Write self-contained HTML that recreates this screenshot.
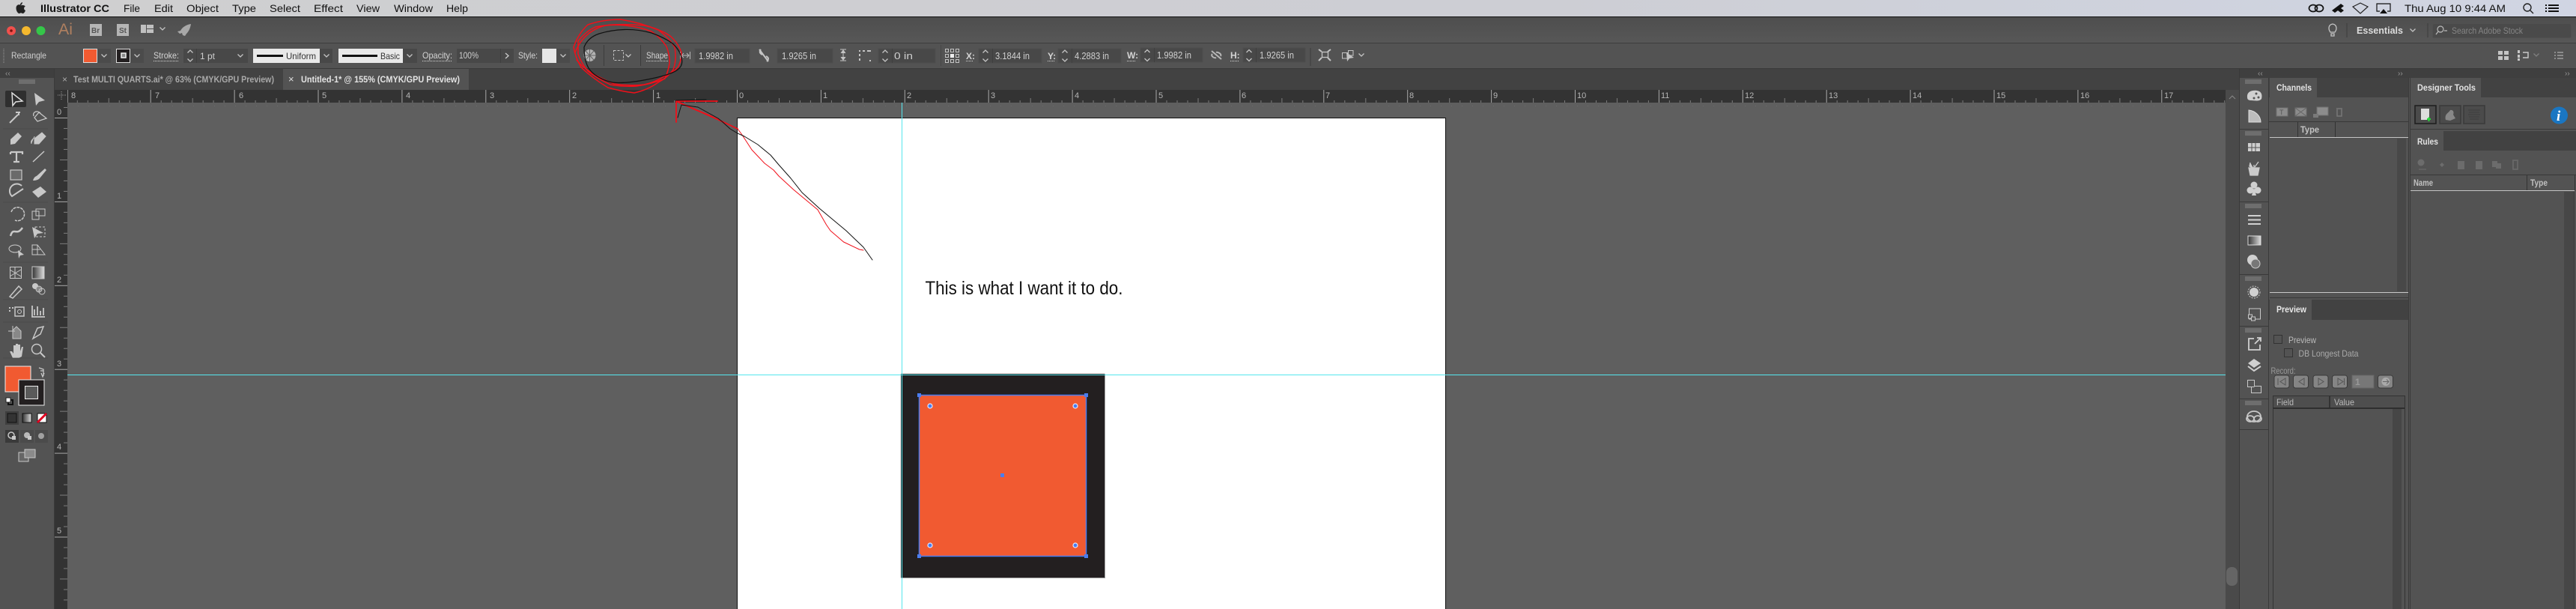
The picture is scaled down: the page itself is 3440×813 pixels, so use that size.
<!DOCTYPE html>
<html><head><meta charset="utf-8"><title>Illustrator CC</title>
<style>
html,body{margin:0;padding:0;background:#5f5f5f;width:3440px;height:813px;overflow:hidden}
svg{display:block}
text{font-family:"Liberation Sans",sans-serif;fill:#cfcfcf;font-size:12px}
.m{fill:#111;font-size:14px}
.b{font-weight:bold}
.l{fill:#d4d4d4;font-size:12px}
.r{fill:#b5b5b5;font-size:11px}
.i{fill:#c8c8c8}
.s{fill:none;stroke:#c8c8c8;stroke-width:1.5}
.f{fill:#484848;stroke:#4e4e4e}
.sep{stroke:#3c3c3c;stroke-width:1}
.u{stroke:#d4d4d4;stroke-width:1;stroke-dasharray:1 1;fill:none}
</style></head><body>
<svg width="3440" height="813" viewBox="0 0 3440 813" xmlns="http://www.w3.org/2000/svg">
<defs>
<linearGradient id="mb" x1="0" x2="1" y1="0" y2="0"><stop offset="0" stop-color="#cfcfd0"/><stop offset=".6" stop-color="#cdced4"/><stop offset="1" stop-color="#d0d5e3"/></linearGradient>
<linearGradient id="tb" x1="0" x2="0" y1="0" y2="1"><stop offset="0" stop-color="#4e4e4e"/><stop offset="1" stop-color="#575757"/></linearGradient>
<linearGradient id="gr" x1="0" x2="1" y1="0" y2="0"><stop offset="0" stop-color="#333"/><stop offset="1" stop-color="#ddd"/></linearGradient>
<pattern id="rt" patternUnits="userSpaceOnUse" x="984" y="120" width="111.9" height="17">
<path d="M.5 0V17" stroke="#a8a8a8" fill="none"/>
<path d="M14.5 14V17M28.5 14V17M42.5 14V17M56.5 11V17M70.5 14V17M84.4 14V17M98.4 14V17" stroke="#7d7d7d" fill="none"/>
</pattern>
<pattern id="rl" patternUnits="userSpaceOnUse" x="73" y="157" width="17" height="111.9">
<path d="M0 .5H17" stroke="#a8a8a8" fill="none"/>
<path d="M12 14.5H17M12 28.5H17M12 42.5H17M7 56.5H17M12 70.5H17M12 84.4H17M12 98.4H17" stroke="#7d7d7d" fill="none"/>
</pattern>
<g id="ch"><path d="M-3.5 -1.5L0 2L3.5 -1.5" fill="none" stroke="#c4c4c4" stroke-width="1.3"/></g>
<g id="sp"><path d="M-3.5 -4L0 -7.5L3.5 -4M-3.5 4L0 7.5L3.5 4" fill="none" stroke="#c4c4c4" stroke-width="1.3"/></g>
<g id="grip"><path d="M-10 -3V3M-8 -3V3M-6 -3V3M-4 -3V3M-2 -3V3M0 -3V3M2 -3V3M4 -3V3M6 -3V3M8 -3V3M10 -3V3" stroke="#8a8a8a" stroke-width="1"/></g>
<g id="nb"><rect width="20" height="17" rx="3" fill="#858585" stroke="#3a3a3a"/></g>
</defs>

<!-- base -->
<rect width="3440" height="813" fill="#5f5f5f"/>

<!-- menu bar -->
<rect width="3440" height="22" fill="url(#mb)"/>
<rect y="22" width="3440" height="1" fill="#111"/>
<path d="M27.5 7.5C29 6 30 4.5 30 3C28.500 3.300 27 4.500 27 6.500C25 5.600 21.500 6.500 21.500 11C21.500 14.500 24 18 25.500 18C26.500 18 27 17.300 28 17.300C29 17.300 29.500 18 30.500 18C32 18 33.500 15.500 34 14C31.500 13 31.500 9.500 33.800 8.500C32.500 6.800 29.500 6.500 27.500 7.500Z" fill="#222"/>
<text class="m b" x="54" y="16" textLength="92" lengthAdjust="spacingAndGlyphs">Illustrator CC</text>
<text class="m" x="165" y="16" textLength="22" lengthAdjust="spacingAndGlyphs">File</text>
<text class="m" x="206" y="16" textLength="25" lengthAdjust="spacingAndGlyphs">Edit</text>
<text class="m" x="249" y="16" textLength="43" lengthAdjust="spacingAndGlyphs">Object</text>
<text class="m" x="310" y="16" textLength="32" lengthAdjust="spacingAndGlyphs">Type</text>
<text class="m" x="360" y="16" textLength="41" lengthAdjust="spacingAndGlyphs">Select</text>
<text class="m" x="419" y="16" textLength="39" lengthAdjust="spacingAndGlyphs">Effect</text>
<text class="m" x="476" y="16" textLength="31" lengthAdjust="spacingAndGlyphs">View</text>
<text class="m" x="526" y="16" textLength="52" lengthAdjust="spacingAndGlyphs">Window</text>
<text class="m" x="596" y="16" textLength="29" lengthAdjust="spacingAndGlyphs">Help</text>
<g fill="none" stroke="#111" stroke-width="1.700">
<ellipse cx="3089" cy="11" rx="5.500" ry="4.500"/><ellipse cx="3097" cy="11" rx="5.500" ry="4.500"/>
</g>
<path d="M3118 5l4 3-4 3 4 3 -4-3 0 0-4 3 4 3 4-3 4 3 4-3-4-3 4-3-4-3-4 3z" fill="#111"/>
<path d="M3142 9L3152 4L3162 9L3152 18Z" fill="none" stroke="#222" stroke-width="1.200"/>
<path d="M3178 15H3174V5H3192V15H3188" fill="none" stroke="#111" stroke-width="1.200"/>
<path d="M3178 18H3188L3183 12Z" fill="#111"/>
<text class="m" x="3211" y="16" textLength="135" lengthAdjust="spacingAndGlyphs">Thu Aug 10  9:44 AM</text>
<circle cx="3375" cy="10" r="5" fill="none" stroke="#222" stroke-width="1.400"/><path d="M3379 14L3383 18" stroke="#222" stroke-width="1.400"/>
<path d="M3399 7h2M3399 11h2M3399 15h2M3403 7h14M3403 11h14M3403 15h14" stroke="#111" stroke-width="2"/>

<!-- app title bar -->
<rect y="23" width="3440" height="34" fill="url(#tb)"/>
<rect y="57" width="3440" height="1" fill="#3c3c3c"/>
<circle cx="15" cy="41" r="6" fill="#f0504c"/><circle cx="15" cy="41" r="1.800" fill="#7a1410"/>
<circle cx="35" cy="41" r="6" fill="#f5b82e"/>
<circle cx="54.500" cy="41" r="6" fill="#35c649"/>
<text x="78" y="46" textLength="19" lengthAdjust="spacingAndGlyphs" style="fill:#b08060;font-size:21px">Ai</text>
<rect x="120" y="32" width="16" height="16" fill="#b5b5b5"/><text x="122" y="44" style="fill:#555;font-size:10px;font-weight:bold">Br</text>
<rect x="156" y="32" width="16" height="16" fill="#b5b5b5"/><text x="159" y="44" style="fill:#555;font-size:10px;font-weight:bold">St</text>
<path d="M188 33H195V44H188ZM196 33H205V38H196ZM196 39H205V44H196Z" fill="#c0c0c0"/>
<use href="#ch" x="217" y="38"/>
<path d="M255 32C248 33 243 37 241 41L237 42L240 45L243 44L244 47L247 48L249 45C252 42 254 38 255 32Z" fill="#a8a8a8"/>
<path d="M3112 43C3109 39 3109 33 3115 32C3121 33 3121 39 3118 43ZM3113 45H3117V48H3113Z" fill="none" stroke="#c4c4c4" stroke-width="1.300"/>
<path d="M3134 31V50" class="sep"/>
<text class="b" x="3147" y="45" textLength="62" lengthAdjust="spacingAndGlyphs" style="fill:#dcdcdc;font-size:13px">Essentials</text>
<use href="#ch" x="3222" y="40"/>
<path d="M3242 31V50" class="sep"/>
<rect x="3248.500" y="31.500" width="185" height="19" rx="2" fill="#4a4a4a" stroke="#505050"/>
<circle cx="3259" cy="39" r="4" fill="none" stroke="#bbb" stroke-width="1.200"/><path d="M3256 42L3253 46M3264 41h4" stroke="#bbb" stroke-width="1.200"/>
<text x="3274" y="45" textLength="95" lengthAdjust="spacingAndGlyphs" style="fill:#858585;font-size:12px">Search Adobe Stock</text>

<!-- control bar -->
<rect y="58" width="3440" height="33" fill="#535353"/>
<rect y="91" width="3440" height="1" fill="#3a3a3a"/>
<path d="M5 65V84" stroke="#777" stroke-dasharray="1 1" stroke-width="2"/>
<text x="15" y="78" textLength="47" lengthAdjust="spacingAndGlyphs">Rectangle</text>
<rect x="111" y="65" width="37" height="19" fill="#4b4b4b"/>
<rect x="111.500" y="65.500" width="18" height="18" fill="#f15a31" stroke="#ddd"/>
<use href="#ch" x="139" y="74"/>
<rect x="155" y="65" width="37" height="19" fill="#4b4b4b"/>
<rect x="155.500" y="65.500" width="18" height="18" fill="#231f20" stroke="#ddd"/>
<rect x="162" y="71" width="6" height="6" fill="#888" stroke="#eee" stroke-width="1.500"/>
<use href="#ch" x="183" y="74"/>
<text class="l" x="205" y="78" textLength="34" lengthAdjust="spacingAndGlyphs">Stroke:</text>
<path class="u" d="M205 81.500H239"/>
<rect x="245" y="65" width="86" height="19" fill="#484848"/>
<use href="#sp" x="254" y="74.500"/>
<path d="M262.500 65V84" stroke="#3f3f3f"/>
<text x="267" y="79">1 pt</text>
<use href="#ch" x="321" y="74"/>
<rect x="338" y="65" width="89" height="19" fill="#e8e8e8"/>
<rect x="343" y="73" width="35" height="3" fill="#111"/>
<text x="382" y="79" textLength="40" lengthAdjust="spacingAndGlyphs" style="fill:#333">Uniform</text>
<rect x="427" y="65" width="17" height="19" fill="#484848"/><use href="#ch" x="436" y="74"/>
<rect x="452" y="65" width="86" height="19" fill="#e8e8e8"/>
<rect x="457" y="73" width="47" height="3" fill="#111"/>
<text x="508" y="79" textLength="26" lengthAdjust="spacingAndGlyphs" style="fill:#333">Basic</text>
<rect x="538" y="65" width="19" height="19" fill="#484848"/><use href="#ch" x="547" y="74"/>
<text class="l" x="564" y="78" textLength="40" lengthAdjust="spacingAndGlyphs">Opacity:</text>
<path class="u" d="M564 81.500H604"/>
<rect x="610" y="65" width="76" height="19" fill="#484848"/>
<text x="613" y="78" textLength="26" lengthAdjust="spacingAndGlyphs">100%</text>
<path d="M668.500 65V84" stroke="#3f3f3f"/>
<path d="M675 71L679 74.500L675 78" fill="none" stroke="#ccc" stroke-width="1.300"/>
<text class="l" x="692" y="78" textLength="26" lengthAdjust="spacingAndGlyphs">Style:</text>
<rect x="724" y="65" width="37" height="19" fill="#4b4b4b"/>
<rect x="724" y="65" width="19" height="19" fill="#e6e6e6"/>
<use href="#ch" x="752" y="74"/>
<circle cx="787.500" cy="74" r="8" fill="#b4b4b4"/>
<path d="M787.500 66V82M779.500 74H795.500M782 68L793 80M793 68L782 80" stroke="#666"/>
<path d="M806.500 60V88" class="sep"/>
<rect x="819.500" y="67.500" width="13" height="13" fill="none" stroke="#c4c4c4" stroke-dasharray="3 2"/>
<use href="#ch" x="839" y="74"/>
<path d="M855.500 60V88" class="sep"/>
<text class="l" x="863" y="78" textLength="29" lengthAdjust="spacingAndGlyphs">Shape</text>
<path class="u" d="M863 81.500H892"/>
<path d="M908.500 69V79M921.500 69V79M910 74H920M913 71L910 74L913 77M917 71L920 74L917 77" fill="none" stroke="#b8b8b8"/>
<rect class="f" x="928" y="65" width="73" height="19"/>
<text x="933" y="79" textLength="46" lengthAdjust="spacingAndGlyphs" style="font-size:13px">1.9982 in</text>
<path d="M1014 66L1026 82M1016 66C1013 70 1016 72 1018 73M1024 82C1028 78 1025 76 1023 75" fill="none" stroke="#c4c4c4" stroke-width="2"/>
<rect class="f" x="1038" y="65" width="74" height="19"/>
<text x="1044" y="79" textLength="46" lengthAdjust="spacingAndGlyphs" style="font-size:13px">1.9265 in</text>
<path d="M1122 66H1130M1122 81H1130M1126 67V80M1123 71L1126 67L1129 71M1123 76L1126 80L1129 76" fill="#c4c4c4" stroke="#c4c4c4"/>
<path d="M1147 67h2v2h-2zM1152 67h3v2h-3zM1158 67h5v2h-5zM1147 72h2v3h-2zM1147 78h2v3h-2zM1161 80h2v2h-2z" fill="#c4c4c4"/>
<rect class="f" x="1173" y="65" width="76" height="19"/>
<use href="#sp" x="1182" y="74.500"/><path d="M1191.500 65V84" stroke="#3f3f3f"/>
<text x="1194" y="79" textLength="25" lengthAdjust="spacingAndGlyphs" style="font-size:13px">0 in</text>
<path d="M1256.500 60V88" class="sep" opacity=".5"/>
<g fill="none" stroke="#c4c4c4"><rect x="1262.500" y="65.500" width="4" height="4"/><rect x="1269.500" y="65.500" width="4" height="4"/><rect x="1276.500" y="65.500" width="4" height="4"/><rect x="1262.500" y="72.500" width="4" height="4"/><rect x="1276.500" y="72.500" width="4" height="4"/><rect x="1262.500" y="79.500" width="4" height="4"/><rect x="1269.500" y="79.500" width="4" height="4"/><rect x="1276.500" y="79.500" width="4" height="4"/></g>
<rect x="1269" y="72" width="5" height="5" fill="#eee"/>
<text class="l b" x="1290" y="79">X:</text>
<path class="u" d="M1290 81.500H1300"/>
<rect class="f" x="1307" y="65" width="84" height="19"/>
<use href="#sp" x="1316" y="74.500"/><path d="M1325.500 65V84" stroke="#3f3f3f"/>
<text x="1329" y="79" textLength="46" lengthAdjust="spacingAndGlyphs" style="font-size:13px">3.1844 in</text>
<text class="l b" x="1399" y="79">Y:</text>
<path class="u" d="M1399 81.500H1408"/>
<rect class="f" x="1413" y="65" width="84" height="19"/>
<use href="#sp" x="1422" y="74.500"/><path d="M1431.500 65V84" stroke="#3f3f3f"/>
<text x="1435" y="79" textLength="46" lengthAdjust="spacingAndGlyphs" style="font-size:13px">4.2883 in</text>
<text class="l b" x="1505" y="78">W:</text>
<path class="u" d="M1505 81.500H1516"/>
<rect class="f" x="1523" y="64" width="83" height="19"/>
<use href="#sp" x="1532" y="74"/><path d="M1541.500 64V83" stroke="#3f3f3f"/>
<text x="1545" y="78" textLength="46" lengthAdjust="spacingAndGlyphs" style="font-size:13px">1.9982 in</text>
<path d="M1618 68L1631 79M1619 72C1616 75 1622 78 1624 77M1630 75C1632 72 1626 69 1624 70" fill="none" stroke="#b8b8b8" stroke-width="2"/>
<text class="l b" x="1643" y="78">H:</text>
<path class="u" d="M1643 81.500H1654"/>
<rect class="f" x="1660" y="64" width="83" height="19"/>
<use href="#sp" x="1668" y="74"/><path d="M1677.500 64V83" stroke="#3f3f3f"/>
<text x="1682" y="78" textLength="46" lengthAdjust="spacingAndGlyphs" style="font-size:13px">1.9265 in</text>
<path d="M1750 64V88" class="sep"/>
<rect x="1765.500" y="69.500" width="8" height="7" fill="none" stroke="#c4c4c4" stroke-width="1.300"/>
<path d="M1761 66L1765 69M1777 66L1773 69M1761 81L1765 77M1777 81L1773 77" stroke="#c4c4c4" stroke-width="2"/>
<path d="M1792.500 70.500H1800V78H1792.500ZM1800.500 67.500H1807V74H1800.500Z" fill="none" stroke="#c4c4c4"/>
<path d="M1798 70L1808 77L1802 78L1799 82Z" fill="#c4c4c4"/>
<use href="#ch" x="1818" y="73"/>
<path d="M3336 68h6v5h-6zM3344 68h6v5h-6zM3336 75h6v5h-6zM3344 75h6v5h-6z" fill="#c4c4c4"/>
<path d="M3362 67h3v4h-3zM3362 73h3v4h-3zM3362 78h3v3h-3z" fill="#c8c8c8"/>
<path d="M3369 70H3376V77H3369" fill="none" stroke="#c8c8c8" stroke-width="1.500"/>
<use href="#ch" x="3387" y="73" opacity=".4"/>
<path d="M3411 70h2M3411 74h2M3411 78h2M3415 70h8M3415 74h8M3415 78h8" stroke="#c4c4c4"/>

<!-- tab row -->
<rect y="92" width="3440" height="28" fill="#424242"/>
<rect x="378" y="92" width="248" height="28" fill="#535353"/>
<text x="83" y="110" style="fill:#a9a9a9;font-size:12px">×</text>
<text class="b" x="98" y="110" textLength="268" lengthAdjust="spacingAndGlyphs" style="fill:#a9a9a9">Test MULTI QUARTS.ai* @ 63% (CMYK/GPU Preview)</text>
<text x="385" y="110" style="fill:#ddd;font-size:13px">×</text>
<text class="b" x="402" y="110" textLength="212" lengthAdjust="spacingAndGlyphs" style="fill:#e4e4e4">Untitled-1* @ 155% (CMYK/GPU Preview)</text>

<!-- rulers -->
<rect x="73" y="120" width="2899" height="17" fill="#333"/>
<rect x="73" y="120" width="17" height="693" fill="#333"/>
<rect x="90" y="120" width="2882" height="17" fill="url(#rt)"/>
<rect x="73" y="137" width="17" height="676" fill="url(#rl)"/>
<path d="M90.500 120V137" stroke="#888"/>
<path d="M77 127H88M82 122V133" stroke="#999" stroke-dasharray="1 1"/>
<text class="r" x="95" y="131">8</text><text class="r" x="207" y="131">7</text><text class="r" x="319" y="131">6</text><text class="r" x="430" y="131">5</text><text class="r" x="542" y="131">4</text><text class="r" x="654" y="131">3</text><text class="r" x="764" y="131">2</text><text class="r" x="876" y="131">1</text><text class="r" x="987" y="131">0</text><text class="r" x="1099" y="131">1</text><text class="r" x="1211" y="131">2</text><text class="r" x="1323" y="131">3</text><text class="r" x="1435" y="131">4</text><text class="r" x="1547" y="131">5</text><text class="r" x="1658" y="131">6</text><text class="r" x="1770" y="131">7</text><text class="r" x="1882" y="131">8</text><text class="r" x="1994" y="131">9</text><text class="r" x="2106" y="131">10</text><text class="r" x="2218" y="131">11</text><text class="r" x="2330" y="131">12</text><text class="r" x="2442" y="131">13</text><text class="r" x="2554" y="131">14</text><text class="r" x="2666" y="131">15</text><text class="r" x="2778" y="131">16</text><text class="r" x="2890" y="131">17</text>
<text class="r" x="76" y="153">0</text><text class="r" x="76" y="265">1</text><text class="r" x="76" y="377">2</text><text class="r" x="76" y="489">3</text><text class="r" x="76" y="600">4</text><text class="r" x="76" y="712">5</text>

<!-- canvas -->
<rect x="90" y="137" width="2882" height="676" fill="#5f5f5f"/>
<path d="M90 141.500H2972" stroke="#6a6a6a" stroke-dasharray="1 13"/>
<rect x="984.500" y="157.500" width="946" height="660" fill="#fff" stroke="#111"/>
<text x="1235.500" y="393" textLength="264" lengthAdjust="spacingAndGlyphs" style="fill:#111;font-size:25px">This is what I want it to do.</text>

<!-- artwork -->
<rect x="1203" y="499" width="272" height="272" fill="#231f20"/>
<path d="M1475.500 499V771.500H1203" fill="none" stroke="#999"/>
<rect x="1228" y="528" width="222" height="214" fill="#f15a31"/>
<rect x="1227.500" y="527.500" width="223" height="215" fill="none" stroke="#4a7df0" stroke-width="1.500"/>
<g fill="#4a7df0"><rect x="1225" y="525" width="5" height="5"/><rect x="1448" y="525" width="5" height="5"/><rect x="1225" y="740" width="5" height="5"/><rect x="1448" y="740" width="5" height="5"/><rect x="1336" y="632" width="5" height="5"/></g>
<g fill="#4a7df0" stroke="#dfe8ff" stroke-width="1.200"><circle cx="1242" cy="542" r="3"/><circle cx="1436" cy="542" r="3"/><circle cx="1242" cy="728" r="3"/><circle cx="1436" cy="728" r="3"/></g>

<!-- guides -->
<path d="M1204.500 137V813" stroke="#55e6ee"/>
<path d="M90 500.500H2972" stroke="#55e6ee"/>

<!-- annotations -->
<g fill="none" stroke-linejoin="round" stroke-linecap="round">
<path stroke="#f0101a" stroke-width="1.500" d="M766 63Q772 45 785 33Q805 26 829 26Q855 30 879 40Q893 50 901 63Q904 80 899 93Q892 103 879 110Q865 120 847 124Q830 122 812 117Q792 105 776 90Q768 76 766 63"/>
<path stroke="#f0101a" stroke-width="1.500" d="M768 70Q775 52 790 42Q804 33 818 33Q840 32 860 34Q880 38 895 48Q906 58 910 70Q910 82 905 90Q898 98 890 100Q875 110 860 113Q840 115 820 112Q805 106 790 97Q778 90 770 80"/>
<path stroke="#f0101a" stroke-width="1.500" d="M772 55Q782 42 795 36Q815 32 835 34Q855 36 870 42Q882 50 890 62Q895 75 894 85Q892 96 888 105Q870 112 850 115Q832 116 815 113Q798 105 785 95Q776 84 772 72Z"/>
<path stroke="#111" stroke-width="1.200" d="M780 63Q785 50 800 45Q816 40 834 39.500Q852 39 870 44Q887 50 898 58Q908 67 910 77Q913 87 905 93Q896 100 865 106Q834 112 818 110Q803 107 791 97Q780 87 780 63"/>
<path stroke="#f0101a" stroke-width="1.800" d="M903 163V135L958 135M905 136L960 160L985 172"/>
<path stroke="#f0101a" stroke-width="1.300" d="M909 138L950 155L965 163"/>
<path stroke="#f0101a" stroke-width="1" d="M985 172L991 180L1004 200L1021 218L1033 227L1040 235L1059.500 253L1092 280L1103.500 300L1109 308L1126.500 323L1147.500 333L1153 334"/>
<path stroke="#111" stroke-width="1" d="M903 134L943 133M905 157L910 140L932 143L959 158L964 162L975 172L985 178L994 182L1012 193L1029 207L1040 220L1056 238L1071 257L1094 278L1130 308L1153 330L1165 347"/>
</g>

<!-- left tools panel -->
<rect x="0" y="92" width="73" height="721" fill="#535353"/>
<rect x="0" y="92" width="73" height="12" fill="#3f3f3f"/>
<path d="M72.500 92V813" stroke="#3b3b3b"/>
<text x="7" y="101" style="fill:#999;font-size:10px">‹‹</text>
<use href="#grip" x="36" y="109"/>
<rect x="7" y="121" width="28" height="22" rx="2" fill="#2f2f2f"/>
<path d="M16 124L30 135L21 136L17 141Z" fill="none" stroke="#ddd" stroke-width="1.500"/>
<path d="M46 124L60 134L52 136L48 141Z" fill="#c8c8c8"/>
<path d="M13 164L24 153M25 150v4M21 150h6" fill="none" stroke="#c8c8c8" stroke-width="2"/>
<path d="M45 155C43 149 50 147 54 151M46 157L50 162L62 158L52 150Z" fill="none" stroke="#c8c8c8" stroke-width="1.300"/>
<path d="M14 193L14 186L24 177L29 182L20 192Z" class="i"/>
<path d="M42 192C40 186 46 186 46 182M46 192L46 185L56 177L61 182L52 192Z" fill="#c8c8c8" stroke="#c8c8c8"/>
<path d="M14 203H30V206M22 203V216M18 216H26M14 203V206" fill="none" stroke="#c8c8c8" stroke-width="2.200"/>
<path d="M44 216L59 202" class="s"/>
<rect x="14" y="227" width="15" height="13" fill="#6a6a6a" stroke="#c8c8c8" stroke-width="1.200"/>
<path d="M44 241C46 235 48 236 50 234L60 225L62 227L53 238C51 240 48 241 44 241Z" class="i"/>
<path d="M29 248A8 8 0 1 0 16 262L31 252" fill="none" stroke="#c8c8c8" stroke-width="2"/>
<path d="M43 256L54 249L62 256L51 264Z" class="i"/>
<path d="M15 283A9 9 0 1 1 20 294" fill="none" stroke="#c8c8c8" stroke-width="1.500" stroke-dasharray="4 1"/>
<rect x="43" y="282" width="9" height="11" fill="none" stroke="#c8c8c8"/><rect x="48" y="279" width="12" height="9" fill="none" stroke="#c8c8c8"/>
<path d="M14 315C18 302 22 316 30 304" fill="none" stroke="#c8c8c8" stroke-width="2.500"/>
<path d="M43 303L58 311L50 312L46 318Z" class="i"/><rect x="47" y="303" width="13" height="13" fill="none" stroke="#c8c8c8" stroke-dasharray="3 2"/>
<ellipse cx="20" cy="332" rx="8" ry="5" fill="none" stroke="#c8c8c8"/><path d="M24 334L32 340L27 341L25 345Z" class="i"/>
<path d="M43 327H50L60 340H43ZM43 333H54M50 327V340" fill="none" stroke="#c8c8c8"/>
<g fill="none" stroke="#c8c8c8"><rect x="13.500" y="356.500" width="15" height="15"/><path d="M13 360L28 369M28 360L13 369M20 356V372"/></g>
<rect x="43" y="356" width="16" height="16" fill="url(#gr)" stroke="#c8c8c8"/>
<path d="M13 396L25 382L29 386L17 398Z" class="s"/>
<circle cx="47" cy="382" r="4" class="i"/><circle cx="52" cy="386" r="4" fill="#888" stroke="#c8c8c8"/><circle cx="56" cy="389" r="4" fill="none" stroke="#c8c8c8"/>
<rect x="20" y="410" width="12" height="12" fill="none" stroke="#c8c8c8" stroke-width="1.500"/><circle cx="26" cy="416" r="2.500" fill="none" stroke="#c8c8c8"/><path d="M12 410h2v2h-2zM16 410h2v2h-2zM12 414h2v2h-2z" class="i"/>
<path d="M43 408V423H60M46 421V413M50 421V409M54 421V415M58 421V411" fill="none" stroke="#c8c8c8" stroke-width="1.800"/>
<path d="M17 441L22 436L28 442V452H17Z" fill="#888" stroke="#c8c8c8"/><path d="M11 442H20M17 435V444" stroke="#c8c8c8"/>
<path d="M44 452L50 438L58 436L54 446Z" fill="none" stroke="#c8c8c8" stroke-width="1.500"/>
<path d="M17 478L13 469L16 469L18 472V461H21V468V459H24V468V460H27V469L29 463H31L29 476L25 478Z" fill="#c8c8c8"/>
<circle cx="49" cy="466" r="6.500" fill="none" stroke="#c8c8c8" stroke-width="1.500"/><path d="M54 471L60 477" stroke="#c8c8c8" stroke-width="2"/>
<rect x="7" y="489" width="34" height="34" fill="#f15a31" stroke="#eee" stroke-width="1"/>
<rect x="25" y="507" width="34" height="34" fill="#231f20" stroke="#eee" stroke-width="1"/>
<rect x="33.500" y="515.500" width="17" height="17" fill="#5a5a5a" stroke="#eee" stroke-width="1"/>
<path d="M52 491L58 493L58 499M54 495H58V502M59 498L57 503L55 498" fill="none" stroke="#ccc" stroke-width="1.200"/>
<rect x="11" y="534" width="6" height="6" fill="none" stroke="#111" stroke-width="2"/><rect x="8" y="531" width="6" height="6" fill="#fff" stroke="#222"/>
<rect x="7" y="549" width="18" height="18" fill="#3f3f3f"/><rect x="10" y="552" width="12" height="12" fill="#333" stroke="#111"/>
<rect x="30" y="552" width="12" height="12" fill="url(#gr)" stroke="#111"/>
<rect x="50" y="552" width="12" height="12" fill="#fff" stroke="#111"/><path d="M50 564L62 552" stroke="#e00020" stroke-width="3"/>
<rect x="7" y="574" width="18" height="17" fill="#3a3a3a"/><rect x="27" y="574" width="18" height="17" fill="#4b4b4b"/><rect x="47" y="574" width="17" height="17" fill="#4b4b4b"/>
<circle cx="15" cy="581" r="4" fill="none" stroke="#c8c8c8" stroke-width="1.500"/><rect x="16" y="582" width="5" height="5" fill="#c8c8c8"/>
<circle cx="36" cy="581" r="4" fill="#b8b8b8"/><rect x="37" y="582" width="5" height="5" fill="#c8c8c8"/>
<circle cx="55" cy="582" r="4" fill="#a0a0a0"/>
<rect x="25" y="604" width="13" height="12" fill="#666" stroke="#c8c8c8"/><rect x="33" y="600" width="14" height="11" fill="#8a8a8a" stroke="#c8c8c8"/>
<path d="M4 172H64M4 270H64M4 350H64M4 400H64M4 430H64M4 478H64" stroke="#484848" opacity=".7"/>

<!-- scroll strip -->
<rect x="2972" y="120" width="18" height="693" fill="#4a4a4a"/>
<path d="M2977 132L2981 128L2985 132" fill="none" stroke="#888"/>
<rect x="2973" y="757" width="15" height="25" rx="7" fill="#656565"/>

<!-- right panels base -->
<rect x="2990" y="92" width="450" height="721" fill="#535353"/>
<rect x="2990" y="92" width="450" height="12" fill="#3f3f3f"/>
<path d="M2990.500 92V813M3029.500 104V813M3216.500 104V813M3218.500 104V813" stroke="#3a3a3a"/>
<text x="3015" y="101" style="fill:#999;font-size:10px">‹‹</text>
<text x="3202" y="101" style="fill:#999;font-size:10px">››</text>
<text x="3425" y="101" style="fill:#999;font-size:10px">››</text>

<!-- dock -->
<use href="#grip" x="3009" y="109"/>
<path d="M3001 130C3000 122 3008 120 3014 121C3021 122 3021 128 3020 132C3017 136 3010 134 3006 134C3003 134 3001 133 3001 130Z" fill="#d0d0d0"/>
<circle cx="3013" cy="125" r="1.500" fill="#555"/><circle cx="3016" cy="130" r="1.500" fill="#555"/><circle cx="3010" cy="131" r="1.500" fill="#555"/>
<path d="M3003 147V163H3019C3019 155 3012 148 3003 147Z" fill="#bdbdbd" stroke="#ddd"/>
<path d="M2991 172.500H3029" stroke="#3a3a3a"/>
<use href="#grip" x="3009" y="178"/>
<rect x="3002" y="191" width="16" height="11" fill="#d0d0d0"/><path d="M3002 197H3018M3007 191V202M3012 191V202" stroke="#535353"/>
<path d="M3010 234V220M3005 217L3004 222L3009 224M3016 216L3011 223M3003 224H3017L3015 234H3005Z" fill="#cacaca" stroke="#cacaca" stroke-width="1.300"/>
<circle cx="3010" cy="247" r="4.500" fill="#d0d0d0"/><circle cx="3005" cy="254" r="4.500" fill="#d0d0d0"/><circle cx="3015" cy="254" r="4.500" fill="#d0d0d0"/><path d="M3010 250L3007 261H3013Z" fill="#d0d0d0"/>
<path d="M2991 269.500H3029" stroke="#3a3a3a"/>
<use href="#grip" x="3009" y="275"/>
<path d="M3002 288H3019M3002 293.500H3019M3002 299H3019" stroke="#d0d0d0" stroke-width="2"/>
<rect x="3002" y="315" width="17" height="12" fill="url(#gr)" stroke="#ddd"/>
<circle cx="3008" cy="347" r="7" fill="#d0d0d0"/><circle cx="3012" cy="352" r="6" fill="#777" stroke="#ccc"/>
<path d="M2991 366.500H3029" stroke="#3a3a3a"/>
<use href="#grip" x="3009" y="372"/>
<circle cx="3010" cy="390" r="6" fill="#d0d0d0"/><circle cx="3010" cy="390" r="8" fill="none" stroke="#c8c8c8" stroke-dasharray="2 1.500"/>
<rect x="3003.500" y="412" width="15" height="14" fill="none" stroke="#c8c8c8"/><rect x="3002.500" y="420" width="5" height="5" fill="#555" stroke="#c8c8c8"/><rect x="3006.500" y="423" width="5" height="5" fill="#555" stroke="#c8c8c8"/>
<path d="M2991 435.500H3029" stroke="#3a3a3a"/>
<use href="#grip" x="3009" y="441"/>
<path d="M3010 452H3003V467H3018V460M3011 459L3019 451M3014 451H3019V456" fill="none" stroke="#d0d0d0" stroke-width="1.800"/>
<path d="M3010 479L3019 485L3010 491L3002 485Z" fill="#d0d0d0"/><path d="M3002 489L3010 495L3019 489" fill="none" stroke="#d0d0d0" stroke-width="2"/>
<path d="M3001.500 507.500H3010.500V515.500H3019.500V524.500H3006.500V516.500H3001.500Z" fill="none" stroke="#c8c8c8"/><path d="M3006.500 516.500H3010.500" stroke="#c8c8c8"/>
<path d="M2991 532.500H3029" stroke="#3a3a3a"/>
<use href="#grip" x="3009" y="538"/>
<g fill="none" stroke="#c8c8c8" stroke-width="1.800"><ellipse cx="3010" cy="556" rx="9" ry="7"/><ellipse cx="3005" cy="559" rx="5" ry="4"/><ellipse cx="3015" cy="559" rx="5" ry="4"/></g>
<path d="M2991 573.500H3029" stroke="#3a3a3a"/>

<!-- channels panel -->
<rect x="3030" y="104" width="186" height="26" fill="#424242"/>
<rect x="3031" y="104" width="63" height="27" fill="#535353"/>
<text class="b" x="3040" y="121" textLength="47" lengthAdjust="spacingAndGlyphs" style="fill:#e2e2e2">Channels</text>
<rect x="3040" y="144" width="15" height="11" fill="#8c8c8c" stroke="#707070"/><text x="3044" y="153" style="fill:#555;font-size:9px">T</text>
<rect x="3065" y="144" width="15" height="11" fill="#8c8c8c" stroke="#707070"/><path d="M3065 144L3080 155M3080 144L3065 155" stroke="#666"/>
<rect x="3094" y="143" width="15" height="11" fill="#8c8c8c" stroke="#707070"/><path d="M3089 152H3096V157H3089Z" fill="#7a7a7a"/>
<path d="M3121 146V155H3127V146M3120 145H3128" fill="none" stroke="#777" stroke-width="1.500"/>
<path d="M3030 162.500H3216" stroke="#383838"/>
<path d="M3068.500 163V183M3118.500 163V183" stroke="#333"/>
<text class="b" x="3072" y="177" textLength="25" lengthAdjust="spacingAndGlyphs" style="fill:#c4c4c4">Type</text>
<path d="M3031 183.500H3216" stroke="#c4c4c4"/>
<rect x="3201" y="185" width="12" height="204" fill="#484848"/>
<path d="M3031 390.500H3216" stroke="#c8c8c8"/>
<path d="M3031 397.500H3216" stroke="#383838"/>

<!-- preview panel -->
<rect x="3030" y="400" width="186" height="27" fill="#424242"/>
<rect x="3031" y="400" width="56" height="27" fill="#535353"/>
<text class="b" x="3040" y="417" textLength="40" lengthAdjust="spacingAndGlyphs" style="fill:#e8e8e8">Preview</text>
<rect x="3036.500" y="447.500" width="11" height="11" fill="none" stroke="#333"/>
<text x="3056" y="458" textLength="37" lengthAdjust="spacingAndGlyphs" style="fill:#bbb">Preview</text>
<rect x="3050.500" y="465.500" width="11" height="11" fill="none" stroke="#333"/>
<text x="3069.500" y="476" textLength="80" lengthAdjust="spacingAndGlyphs" style="fill:#aaa">DB Longest Data</text>
<text x="3032.500" y="499" textLength="33" lengthAdjust="spacingAndGlyphs" style="fill:#999">Record:</text>
<use href="#nb" x="3037" y="501"/><use href="#nb" x="3062.500" y="501"/><use href="#nb" x="3089" y="501"/><use href="#nb" x="3114.500" y="501"/>
<path d="M3042 505V514M3052 505V514L3045 509.500Z" fill="none" stroke="#555"/>
<path d="M3077 505V514L3070 509.500Z" fill="none" stroke="#555"/>
<path d="M3096 505V514L3103 509.500Z" fill="none" stroke="#555"/>
<path d="M3122 505V514L3129 509.500ZM3130.500 505V514" fill="none" stroke="#555"/>
<rect x="3141" y="501" width="29" height="17" fill="#777" stroke="#666"/>
<text class="b" x="3145" y="514" style="fill:#999;font-size:12px">1</text>
<use href="#nb" x="3175.500" y="501"/>
<circle cx="3186" cy="509.500" r="5.500" fill="#aaa"/><path d="M3182 509.500H3190M3187 506.500L3190 509.500L3187 512.500" stroke="#666" fill="none"/>
<rect x="3035.500" y="528.500" width="176" height="16" fill="#4e4e4e" stroke="#333"/>
<path d="M3111 528V544" stroke="#333" stroke-width="2"/>
<path d="M3035 545H3211" stroke="#2e2e2e" stroke-width="2"/>
<text x="3040" y="541" textLength="23" lengthAdjust="spacingAndGlyphs" style="fill:#bbb">Field</text>
<text x="3117" y="541" textLength="27" lengthAdjust="spacingAndGlyphs" style="fill:#bbb">Value</text>
<path d="M3035.500 545V813M3211.500 545V813" stroke="#333"/>
<rect x="3195" y="546" width="12" height="267" fill="#464646"/>

<!-- designer tools -->
<rect x="3219" y="104" width="221" height="26" fill="#424242"/>
<rect x="3219" y="104" width="94" height="27" fill="#535353"/>
<text class="b" x="3228" y="121" textLength="78" lengthAdjust="spacingAndGlyphs" style="fill:#e2e2e2">Designer Tools</text>
<rect x="3225" y="141" width="28" height="24" fill="#4b4b4b" stroke="#1d1d1d" stroke-width="1.500"/>
<rect x="3233" y="145" width="11" height="15" fill="#ddd"/><path d="M3241 159H3246M3243.500 156.500V162" stroke="#25d83a" stroke-width="2"/>
<rect x="3258" y="141" width="28" height="24" fill="#4b4b4b" stroke="#3a3a3a" stroke-width="1.500"/>
<path d="M3266 160C3264 152 3270 151 3272 147C3277 146 3277 151 3276 153L3279 158L3272 161Z" fill="#888"/>
<rect x="3290" y="141" width="28" height="24" fill="#4b4b4b" stroke="#3a3a3a" stroke-width="1.500"/>
<path d="M3296 147H3312M3297 150H3311M3296 153H3312M3297 156H3311M3298 159H3310" stroke="#424242" stroke-width="1.500"/>
<circle cx="3417.500" cy="154" r="11.500" fill="#1a76c2"/>
<text x="3414" y="161" style="fill:#fff;font-size:19px;font-family:'Liberation Serif',serif;font-weight:bold;font-style:italic">i</text>
<path d="M3219 172.500H3440" stroke="#3a3a3a"/>

<!-- rules -->
<rect x="3219" y="175" width="221" height="26" fill="#424242"/>
<rect x="3219" y="175" width="44" height="27" fill="#535353"/>
<text class="b" x="3228" y="193" textLength="28" lengthAdjust="spacingAndGlyphs" style="fill:#e2e2e2">Rules</text>
<g fill="#6c6c6c"><circle cx="3233" cy="217" r="4.500"/><path d="M3230 226H3240" stroke="#6c6c6c"/><path d="M3261 217L3264 220L3261 223L3258 220Z"/><rect x="3282" y="215" width="9" height="11"/><rect x="3306" y="215" width="9" height="11"/><rect x="3328" y="215" width="7" height="8"/><rect x="3333" y="218" width="7" height="7"/></g>
<path d="M3356 215V226H3362V215M3355 214H3363" fill="none" stroke="#6c6c6c" stroke-width="1.500"/>
<path d="M3219 233.500H3440" stroke="#383838"/>
<path d="M3374.500 234V254M3438.500 234V254" stroke="#333"/>
<text class="b" x="3223" y="248" textLength="26" lengthAdjust="spacingAndGlyphs" style="fill:#c0c0c0">Name</text>
<text class="b" x="3379" y="248" textLength="23" lengthAdjust="spacingAndGlyphs" style="fill:#c0c0c0">Type</text>
<path d="M3219 254.500H3438" stroke="#c4c4c4"/>
<rect x="3424" y="256" width="13" height="557" fill="#474747"/>
<path d="M3437.500 256V813" stroke="#3a3a3a"/>
</svg>
</body></html>
